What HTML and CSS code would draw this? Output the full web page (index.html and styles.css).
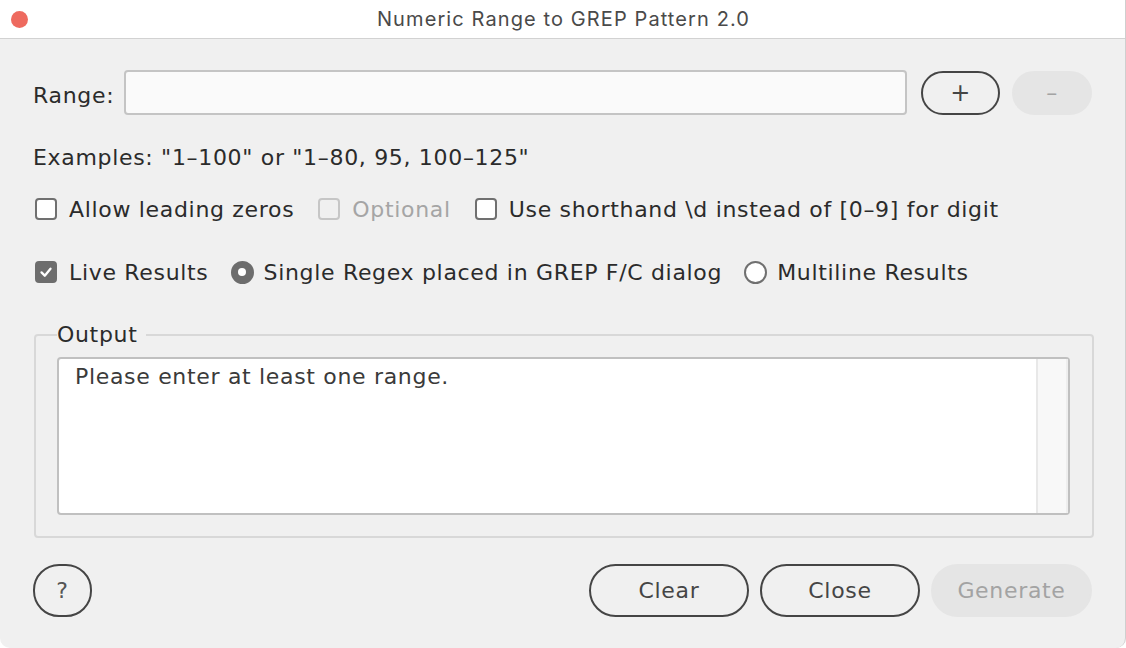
FILE: index.html
```html
<!DOCTYPE html>
<html>
<head>
<meta charset="utf-8">
<link rel="stylesheet" href="styles.css">
</head>
<body>
<div class="window">
  <div class="titlebar">
    <span class="close-dot"></span>
    <span class="title">Numeric Range to GREP Pattern 2.0</span>
  </div>
  <div class="content">
    <div class="range-row">
      <span class="label">Range:</span>
      <div class="input"></div>
      <button class="btn pill plus">+</button>
      <button class="btn pill disabled minus">–</button>
    </div>
    <div class="examples">Examples: "1–100" or "1–80, 95, 100–125"</div>
    <div class="opt-row row1">
      <label class="opt"><span class="cb"></span><span>Allow leading zeros</span></label>
      <label class="opt dim"><span class="cb"></span><span>Optional</span></label>
      <label class="opt"><span class="cb"></span><span>Use shorthand \d instead of [0–9] for digit</span></label>
    </div>
    <div class="opt-row row2">
      <label class="opt"><span class="cb checked"><svg viewBox="0 0 22 22" width="22" height="22"><path d="M5.5 11.5 L9.5 15.5 L16.5 7" fill="none" stroke="#fff" stroke-width="2.8" stroke-linecap="round" stroke-linejoin="round"/></svg></span><span>Live Results</span></label>
      <label class="opt"><span class="rb on"></span><span>Single Regex placed in GREP F/C dialog</span></label>
      <label class="opt"><span class="rb"></span><span>Multiline Results</span></label>
    </div>
    <fieldset class="output">
      <legend>Output</legend>
      <div class="textarea">
        <div class="ta-text">Please enter at least one range.</div>
        <div class="scroll"></div>
      </div>
    </fieldset>
    <div class="bottom">
      <button class="btn help">?</button>
      <div class="actions">
        <button class="btn pill wide">Clear</button>
        <button class="btn pill wide">Close</button>
        <button class="btn pill wide disabled">Generate</button>
      </div>
    </div>
  </div>
</div>
</body>
</html>
```
FILE: styles.css
```css
* { box-sizing: border-box; }
html, body { margin: 0; padding: 0; background: #ffffff; }
body { width: 1126px; height: 648px; overflow: hidden; }
.window {
  width: 1126px; height: 648px;
  background: #f0f0f0;
  border-right: 1px solid #cfcfcf;
  border-radius: 0 0 10px 10px;
  display: flex; flex-direction: column;
  font-family: "DejaVu Sans", sans-serif;
  color: #2b2b2b;
  overflow: hidden;
}
.titlebar {
  height: 39px; flex: none;
  background: #ffffff;
  border-bottom: 1px solid #d2d2d2;
  display: flex; align-items: center; justify-content: center;
  position: relative;
}
.close-dot {
  position: absolute; left: 11px; top: 11px;
  width: 17px; height: 17px; border-radius: 50%;
  background: #ee6a5f;
}
.title {
  font-family: "Inter", "Liberation Sans", sans-serif;
  font-size: 20px; color: #4a4a4a; letter-spacing: 1.1px;
  padding-left: 2px;
}
.content {
  padding: 31px 33px 0 33px;
  display: flex; flex-direction: column;
  font-size: 22px; letter-spacing: 0.68px;
}
.range-row { display: flex; align-items: center; height: 45px; }
.label { width: 91px; padding-top: 5px; }
.input {
  width: 784px; height: 45px;
  border: 2px solid #c4c4c4; border-radius: 4px;
  background: #fafafa;
}
.btn {
  font-family: "DejaVu Sans", sans-serif;
  font-size: 22px; letter-spacing: 0.68px; color: #454545;
  background: transparent;
  border: 2px solid #454545;
  display: flex; align-items: center; justify-content: center;
  padding: 0;
}
.pill { border-radius: 22px; height: 44px; }
.plus { width: 79px; margin-left: 14px; font-size: 24px; }
.minus { width: 80px; margin-left: 12px; }
.btn.disabled { background: #e5e5e5; border-color: #e5e5e5; color: #a3a3a3; }
.examples { margin-top: 28px; height: 30px; line-height: 30px; }
.opt-row { display: flex; align-items: center; height: 30px; }
.row1 { margin-top: 21px; }
.row2 { margin-top: 33px; }
.opt { display: flex; align-items: center; margin-right: 22px; }
.opt.dim { color: #a5a5a5; }
.cb {
  width: 22px; height: 22px; border: 2px solid #707070; border-radius: 4px;
  margin: 0 12px 0 2px; background: #fff;
  display: flex; align-items: center; justify-content: center;
}
.opt.dim .cb { border-color: #c6c6c6; background: transparent; }
.cb.checked { background: #6d6d6d; border-color: #6d6d6d; }
.rb {
  width: 23px; height: 23px; border-radius: 50%;
  border: 2px solid #707070; margin: 0 10px 0 0; background: #fff;
}
.rb.on { background: #6d6d6d; border-color: #6d6d6d; position: relative; }
.rb.on::after {
  content: ""; position: absolute; left: 5.5px; top: 5.5px;
  width: 8px; height: 8px; border-radius: 50%; background: #fff;
}
.output {
  margin: 37px 0 0 1px; width: 1060px; height: 214px;
  border: 2px solid #d8d8d8; border-radius: 4px;
  padding: 0 22px 19px 21px;
}
.output legend {
  padding: 0 8px 0 0; margin-left: 0; font-size: 22px; line-height: 22px;
  color: #2b2b2b;
}
.textarea {
  margin-top: 11px; height: 158px;
  border: 2px solid #c0c0c0; border-radius: 4px;
  background: #fff;
  display: flex;
}
.ta-text { flex: 1; padding: 5px 0 0 16px; color: #3a3a3a; }
.scroll {
  width: 32px; background: #f8f8f8;
  border-left: 2px solid #e8e8e8; border-right: 2px solid #eeeeee;
}
.bottom { display: flex; justify-content: space-between; margin-top: 26px; }
.help { width: 59px; height: 53px; border-radius: 26px; color: #555; }
.actions { display: flex; gap: 11px; }
.wide { width: 160px; height: 53px; border-radius: 27px; }
.actions .disabled { width: 161px; }
```
